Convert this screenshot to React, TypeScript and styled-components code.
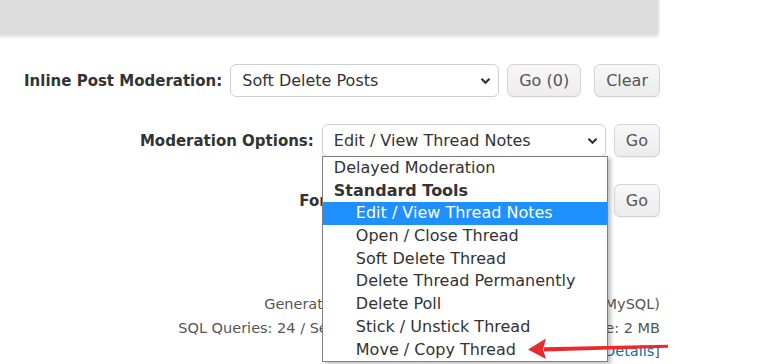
import React from 'react';
import styled, { createGlobalStyle } from 'styled-components';

const GlobalStyle = createGlobalStyle`
  html, body {
    margin: 0;
    padding: 0;
    background: #fff;
  }
  body {
    font-family: "DejaVu Sans", Verdana, sans-serif;
    color: #333;
  }
`;

interface Option {
  label: string;
  group?: boolean;
  indent?: boolean;
  selected?: boolean;
}

const threadOptions: Option[] = [
  { label: 'Delayed Moderation' },
  { label: 'Standard Tools', group: true },
  { label: 'Edit / View Thread Notes', indent: true, selected: true },
  { label: 'Open / Close Thread', indent: true },
  { label: 'Soft Delete Thread', indent: true },
  { label: 'Delete Thread Permanently', indent: true },
  { label: 'Delete Poll', indent: true },
  { label: 'Stick / Unstick Thread', indent: true },
  { label: 'Move / Copy Thread', indent: true },
];

const Chevron = () => (
  <svg width="11" height="8" viewBox="0 0 11 8">
    <path d="M1.5 1.8 L5.5 5.8 L9.5 1.8" fill="none" stroke="#333" strokeWidth="2.2" />
  </svg>
);

const SelectControl: React.FC<{ width: number; value: string; children?: React.ReactNode }> = props => {
  return (
    <SelectWrap>
      <SelectBox width={props.width}>
        <SelectValue>{props.value}</SelectValue>
        <Chevron />
      </SelectBox>
      {props.children}
    </SelectWrap>
  );
};

const App: React.FC = () => {
  return (
    <Screen>
      <GlobalStyle />
      <Content>
        <TopPanel />
        <Form>
          <Row>
            <Label>Inline Post Moderation:</Label>
            <SelectControl width={269} value="Soft Delete Posts" />
            <Button>Go (0)</Button>
            <Button spaced>Clear</Button>
          </Row>
          <Row>
            <Label>Moderation Options:</Label>
            <SelectControl width={284} value="Edit / View Thread Notes">
              <OptionList>
                {threadOptions.map(o => (
                  <OptionItem key={o.label} group={o.group} indent={o.indent} selected={o.selected}>
                    {o.label}
                  </OptionItem>
                ))}
              </OptionList>
            </SelectControl>
            <Button>Go</Button>
          </Row>
          <Row>
            <Label>Forum Jump:</Label>
            <SelectControl width={191} value="Dashboard" />
            <Button>Go</Button>
          </Row>
        </Form>
        <Footer>
          <FooterLine>Generated in 0.0412 seconds (79% PHP / 21% MySQL)</FooterLine>
          <FooterLine>SQL Queries: 24 / Server Load: Unavailable / Memory Usage: 2 MB</FooterLine>
          <FooterLine>
            [<FooterLink>Advanced Details</FooterLink>]
          </FooterLine>
        </Footer>
      </Content>
      <Arrow width="160" height="30" viewBox="0 0 160 30">
        <polygon points="24,13.2 148,10.8 148,13.8 24,17.6" fill="#ea2a2a" />
        <polygon points="8,15.5 26,4.5 23,15.4 26,25" fill="#ea2a2a" />
      </Arrow>
    </Screen>
  );
};

export default App;

const Screen = styled.div`
  position: relative;
  width: 784px;
  height: 364px;
  overflow: hidden;
`;

const Content = styled.div`
  width: 660px;
  display: flex;
  flex-direction: column;
`;

const TopPanel = styled.div`
  width: 658px;
  height: 35px;
  background: #dddddd;
  border-bottom: 2px solid #e9e9e9;
  border-right: 1px solid #e6e6e6;
  border-bottom-right-radius: 6px;
  box-shadow: 1px 1px 2px rgba(0, 0, 0, 0.08);
`;

const Form = styled.div`
  margin-top: 27px;
  display: flex;
  flex-direction: column;
  gap: 27px;
`;

const Row = styled.div`
  display: flex;
  justify-content: flex-end;
  align-items: center;
  height: 33px;
`;

const Label = styled.span`
  font-weight: bold;
  font-size: 15px;
  color: #333;
  margin-right: 8px;
  white-space: nowrap;
`;

const SelectWrap = styled.div`
  position: relative;
`;

const SelectBox = styled.div<{ width: number }>`
  box-sizing: border-box;
  width: ${p => p.width}px;
  height: 33px;
  display: flex;
  align-items: center;
  justify-content: space-between;
  padding: 0 7px 0 11px;
  border: 1px solid #cfcfcf;
  border-radius: 6px;
  background: #fff;
  font-size: 16px;
  color: #333;
`;

const SelectValue = styled.span`
  white-space: nowrap;
`;

const Button = styled.div<{ spaced?: boolean }>`
  box-sizing: border-box;
  height: 33px;
  display: flex;
  align-items: center;
  padding: 0 11px;
  margin-left: ${p => (p.spaced ? 13 : 8)}px;
  border: 1px solid #d4d4d4;
  border-radius: 6px;
  background: linear-gradient(#f8f8f8, #ececec);
  box-shadow: 0 1px 1px rgba(0, 0, 0, 0.06);
  font-size: 16px;
  color: #555;
  white-space: nowrap;
`;

const OptionList = styled.div`
  position: absolute;
  top: 32px;
  left: 0;
  z-index: 10;
  box-sizing: border-box;
  width: 286px;
  background: #fff;
  border: 1px solid #808080;
  box-shadow: 3px 2px 4px rgba(0, 0, 0, 0.25);
`;

const OptionItem = styled.div<{ group?: boolean; indent?: boolean; selected?: boolean }>`
  height: 22.7px;
  line-height: 22.7px;
  padding-left: ${p => (p.indent ? 33 : 11)}px;
  font-size: 16px;
  font-weight: ${p => (p.group ? 'bold' : 'normal')};
  color: ${p => (p.selected ? '#fff' : '#333')};
  background: ${p => (p.selected ? '#1e90ff' : 'transparent')};
  white-space: nowrap;
`;

const Footer = styled.div`
  margin-top: 76px;
  display: flex;
  flex-direction: column;
  align-items: flex-end;
`;

const FooterLine = styled.div`
  font-size: 14.5px;
  line-height: 23.5px;
  color: #555;
  white-space: nowrap;
`;

const FooterLink = styled.span`
  color: #0072bc;
`;

const Arrow = styled.svg`
  position: absolute;
  left: 520px;
  top: 334px;
  z-index: 20;
`;
